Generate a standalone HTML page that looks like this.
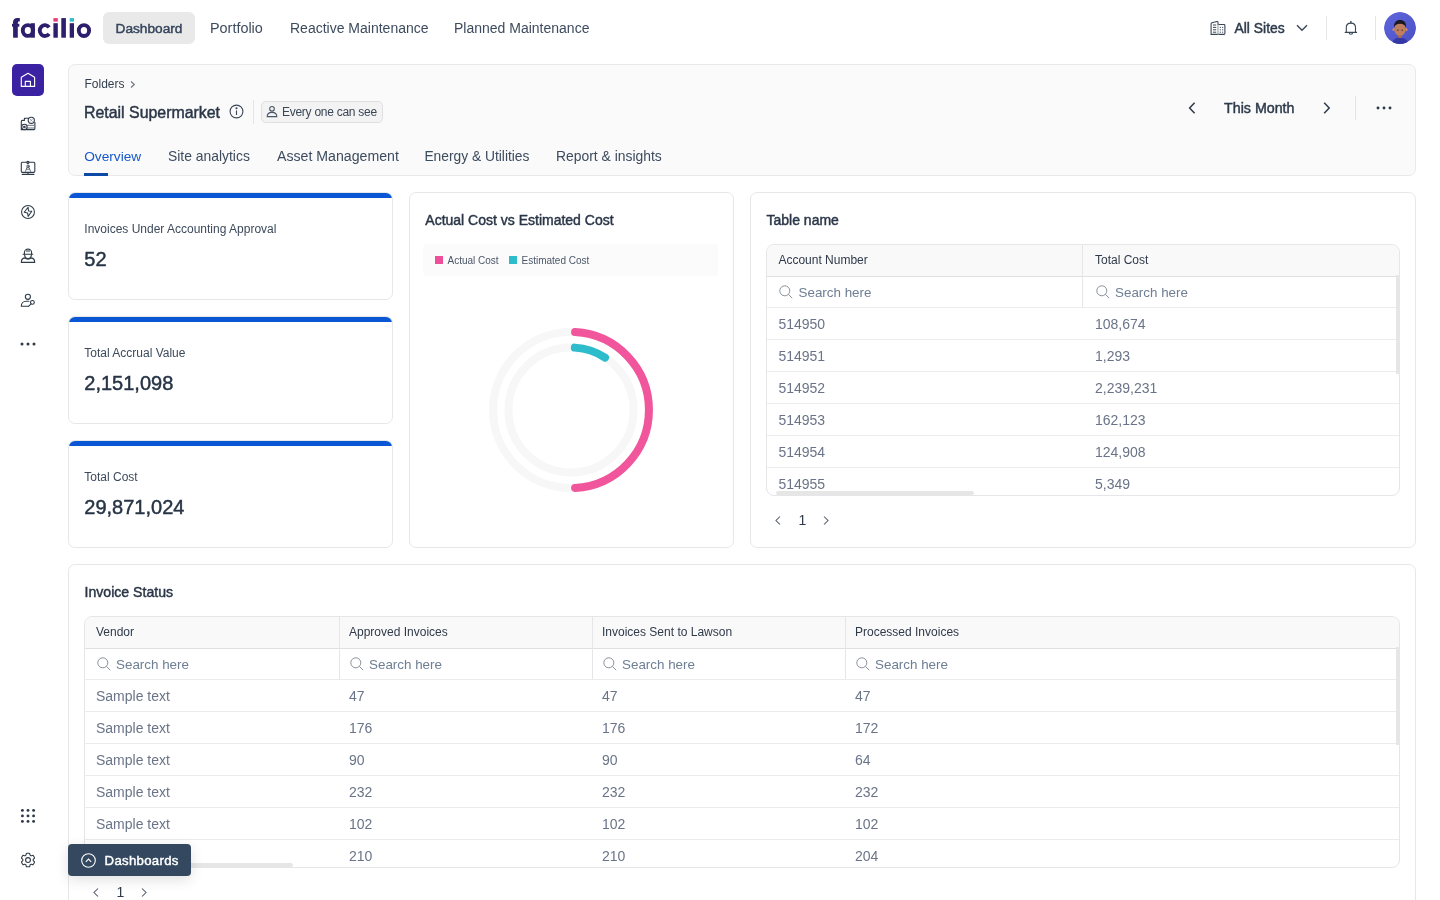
<!DOCTYPE html>
<html><head><meta charset="utf-8"><style>
*{box-sizing:border-box;margin:0;padding:0}
html,body{width:1440px;height:900px;overflow:hidden;background:#fff;font-family:"Liberation Sans",sans-serif}
.t{position:absolute;line-height:1;white-space:nowrap}
.a{position:absolute}
.card{position:absolute;background:#fff;border:1px solid #e7e7e8;border-radius:7px}
svg{position:absolute;overflow:visible}
</style></head><body>
<div id="root" style="position:absolute;left:0;top:0;width:1440px;height:900px;will-change:transform">
<svg style="left:0;top:0" width="100" height="50" viewBox="0 0 100 50">
<g fill="#2d1f6c">
<rect x="12" y="23.8" width="7.3" height="2.9"/>
<rect x="13.1" y="21.5" width="4.7" height="16.2"/>
<path d="M13.1 22.2C13.1 19.4 14.8 18 17.6 18H19.8V21.5H18.6C18 21.5 17.8 21.9 17.8 22.5V23H13.1Z"/>
<rect x="30.8" y="23.2" width="4.1" height="14.5"/>
<rect x="53.4" y="23.2" width="4.4" height="14.5"/>
<rect x="61.3" y="18.1" width="4.6" height="19.6"/>
<rect x="69.7" y="23.2" width="4.3" height="14.5"/>
</g>
<g fill="none" stroke="#2d1f6c" stroke-width="3.9">
<ellipse cx="27.9" cy="30.5" rx="5.1" ry="5.4"/>
<path d="M49.1 27.3A5.2 5.4 0 1 0 49.1 33.8"/>
<ellipse cx="83.95" cy="30.55" rx="5.15" ry="5.45"/>
</g>
<rect x="53.4" y="18.1" width="4.4" height="3.5" fill="#f0387a"/>
<rect x="69.7" y="18.1" width="4.3" height="3.5" fill="#2fbccb"/>
</svg>
<div class="a" style="left:103px;top:12px;width:92px;height:32px;background:#e9e9ea;border-radius:6px"></div>
<div class="t" style="left:115.5px;top:22.00px;font-size:13.7px;font-weight:normal;color:#34445a;;-webkit-text-stroke:0.45px #34445a">Dashboard</div>
<div class="t" style="left:210px;top:21.00px;font-size:14.4px;font-weight:normal;color:#3d4b5e;">Portfolio</div>
<div class="t" style="left:290px;top:21.00px;font-size:14px;font-weight:normal;color:#3d4b5e;">Reactive Maintenance</div>
<div class="t" style="left:454px;top:21.00px;font-size:14px;font-weight:normal;color:#3d4b5e;">Planned Maintenance</div>
<svg style="left:0;top:0" width="1440" height="50" viewBox="0 0 1440 50" fill="none" stroke="#3a4656" stroke-width="1.1" stroke-linejoin="round" stroke-linecap="round">
<path d="M1211.1 34.4V23.8Q1211.1 22.9 1212 22.7L1217 21.5Q1218 21.3 1218 22.3V24.5H1224Q1224.9 24.5 1224.9 25.4V33.5Q1224.9 34.4 1224 34.4Z"/>
<path d="M1218 24.5V34.4" stroke="#9aa1aa"/>
<path d="M1213.4 25h2.4M1213.4 27.4h2.4M1213.4 29.8h2.4M1213.4 32.2h2.4" stroke-width="1"/>
<path d="M1220.2 27.4h0.3M1222.5 27.4h0.3M1220.2 29.8h0.3M1222.5 29.8h0.3M1220.2 32.2h0.3M1222.5 32.2h0.3" stroke-width="1"/>
</svg>
<div class="t" style="left:1234.5px;top:22.00px;font-size:13.9px;font-weight:normal;color:#2c3a4c;;-webkit-text-stroke:0.45px #2c3a4c">All Sites</div>
<svg style="left:1296px;top:24px" width="12" height="8" viewBox="0 0 12 8" fill="none" stroke="#3a4656" stroke-width="1.4"><path d="M1 1.2l5 5 5-5"/></svg>
<div class="a" style="left:1326px;top:16px;width:1px;height:24px;background:#e6e6e8"></div>
<svg style="left:0;top:0" width="1440" height="50" viewBox="0 0 1440 50" fill="none" stroke="#3a4656" stroke-width="1.1" stroke-linejoin="round">
<path d="M1346.3 32.4V27.6C1346.3 24.9 1348.3 23.1 1350.9 23.1S1355.5 24.9 1355.5 27.6V32.4"/>
<path d="M1345.2 32.4H1356.6" stroke-linecap="round"/>
<path d="M1350.9 21.4v1.3" stroke-width="1.3" stroke-linecap="round"/>
<path d="M1349.2 32.7a1.7 1.6 0 0 0 3.4 0"/>
</svg>
<div class="a" style="left:1375px;top:16px;width:1px;height:24px;background:#e6e6e8"></div>
<svg style="left:1384px;top:12px" width="32" height="32" viewBox="0 0 32 32">
<defs><clipPath id="av"><circle cx="16" cy="16" r="16"/></clipPath>
<linearGradient id="avg" x1="0" y1="0" x2="1" y2="1"><stop offset="0" stop-color="#5f66dc"/><stop offset="1" stop-color="#4a50c4"/></linearGradient></defs>
<g clip-path="url(#av)">
<circle cx="16" cy="16" r="16" fill="url(#avg)"/>
<path d="M7 33c1.5-5 4.5-7.5 9-7.5s7.5 2.5 9 7.5z" fill="#3438a6"/>
<rect x="14.2" y="21.5" width="3.6" height="4.5" fill="#a86a4e"/>
<ellipse cx="9.6" cy="17.5" rx="1.2" ry="1.6" fill="#c98a6a"/><ellipse cx="22.4" cy="17.5" rx="1.2" ry="1.6" fill="#c98a6a"/>
<ellipse cx="16" cy="17.4" rx="5.7" ry="6.4" fill="#bf7e5e"/>
<path d="M10 15.6c-0.4-5 2.4-7.6 6-7.6s6.6 2.4 6 7.6c-0.8-2.6-2.8-3.8-6-3.8s-5.2 1.2-6 3.8z" fill="#1b1820"/>
<path d="M13 18.2h1.6M17.4 18.2h1.6" stroke="#3a2620" stroke-width="0.9"/>
</g>
</svg>
<div class="a" style="left:12px;top:64px;width:32px;height:32px;background:#3a22a3;border-radius:5px"></div>
<svg style="left:0;top:0" width="60" height="900" viewBox="0 0 60 900" fill="none" stroke="#2f3a48" stroke-width="1.1" stroke-linejoin="round" stroke-linecap="round">
<path d="M21.3 86.4V77.3L28 73.3l6.6 4v9.1zM25.3 86.4v-5.1h5.1v5.1" stroke="#fff" stroke-width="1.15"/>
<path d="M24.4 118.2h4.2M21.3 129.6V121.4q0-1 1-1h2.1v-1.2q0-1 1-1"/>
<path d="M21.3 129.6h12.6q1 0 1-1v-6.4"/>
<circle cx="31.3" cy="120.3" r="3.1" fill="#fff"/><path d="M30.2 119.2l2.2 2.2M32.4 119.2l-2.2 2.2" stroke-width="0.8" stroke="#8a929c"/>
<path d="M26.8 125.3h7.4M26.8 128h7.4" stroke="#6b7480" stroke-width="1"/>
<circle cx="24.4" cy="127" r="2.7" fill="#fff"/><circle cx="24.4" cy="127" r="0.8"/>
<rect x="21.3" y="162.2" width="13.5" height="10.2" rx="1.1"/><circle cx="27.9" cy="162.4" r="1" fill="#fff"/>
<path d="M28 172.4v2M22.2 174.4h11.7"/>
<circle cx="28" cy="166.2" r="1.2" stroke-width="0.9"/><path d="M25.6 171.2l1.2-3.6h2.4l1.2 3.6M26.6 169.2h2.8" stroke-width="0.9" stroke="#555e6a"/>
<circle cx="28" cy="212" r="6.45" stroke-width="1.05"/>
<path d="M28.1 207.2L28.5 210.9L31.8 211.3L28.1 216.4L27.6 213.1L24.2 212.3Z" stroke-width="1.05"/>
<path d="M24.4 254.2V252.6a3.6 3.6 0 0 1 7.2 0v1.6M23.1 254.3h9.6M27 249.4v2.2M29 249.4v2.2"/>
<path d="M24.6 254.6c0 2.4 1.4 3.9 3.4 3.9s3.4-1.5 3.4-3.9"/>
<path d="M21.3 262.4c0-2.6 1.6-4.2 3.4-4.5c0.8 0.8 1.9 1.2 3.3 1.2s2.5-0.4 3.3-1.2c1.8 0.3 3.4 1.9 3.4 4.5z"/>
<circle cx="27.9" cy="296.8" r="2.55"/>
<path d="M21.3 306.3c0-2.8 2-5 4.8-5h2.8M21.3 306.3h6.8"/>
<circle cx="32.4" cy="302.4" r="1.9"/><path d="M31.1 303.8l-2.6 2.6"/>
<g fill="#2f3a48" stroke="none"><circle cx="22" cy="344" r="1.5"/><circle cx="28" cy="344" r="1.5"/><circle cx="34" cy="344" r="1.5"/><circle cx="22.4" cy="810.4" r="1.45"/><circle cx="22.4" cy="815.9" r="1.45"/><circle cx="22.4" cy="821.4" r="1.45"/><circle cx="28.0" cy="810.4" r="1.45"/><circle cx="28.0" cy="815.9" r="1.45"/><circle cx="28.0" cy="821.4" r="1.45"/><circle cx="33.6" cy="810.4" r="1.45"/><circle cx="33.6" cy="815.9" r="1.45"/><circle cx="33.6" cy="821.4" r="1.45"/></g>
<g transform="translate(18.95 850.95) scale(0.755)" stroke-width="1.45"><path d="M9.594 3.94c.09-.542.56-.94 1.11-.94h2.593c.55 0 1.02.398 1.11.94l.213 1.281c.063.374.313.686.645.87.074.04.147.083.22.127.325.196.72.257 1.075.124l1.217-.456a1.125 1.125 0 0 1 1.37.49l1.296 2.247a1.125 1.125 0 0 1-.26 1.431l-1.003.827c-.293.241-.438.613-.43.992a7.723 7.723 0 0 1 0 .255c-.008.378.137.75.43.991l1.004.827c.424.35.534.955.26 1.43l-1.298 2.247a1.125 1.125 0 0 1-1.369.491l-1.217-.456c-.355-.133-.75-.072-1.076.124a6.47 6.470 0 0 1-.22.128c-.331.183-.581.495-.644.869l-.213 1.281c-.09.543-.56.94-1.110.94h-2.594c-.55 0-1.019-.398-1.11-.94l-.213-1.281c-.062-.374-.312-.686-.644-.87a6.52 6.52 0 0 1-.22-.127c-.325-.196-.72-.257-1.076-.124l-1.217.456a1.125 1.125 0 0 1-1.369-.49l-1.297-2.247a1.125 1.125 0 0 1 .26-1.431l1.004-.827c.292-.24.437-.613.43-.991a6.932 6.932 0 0 1 0-.255c.007-.38-.138-.751-.43-.992l-1.004-.827a1.125 1.125 0 0 1-.26-1.430l1.297-2.247a1.125 1.125 0 0 1 1.37-.491l1.216.456c.356.133.751.072 1.076-.124.072-.044.146-.086.22-.128.332-.183.582-.495.644-.869l.214-1.280Z"/><circle cx="12" cy="12" r="3.2"/></g>
</svg>
<div class="card" style="left:68px;top:64px;width:1348px;height:112px;background:#fafafa;border-color:#e9e9eb"></div>
<div class="t" style="left:84.5px;top:78.00px;font-size:12px;font-weight:normal;color:#333f4f;">Folders</div>
<svg style="left:130px;top:81px" width="6" height="7" viewBox="0 0 6 7" fill="none" stroke="#6b7380" stroke-width="1.1"><path d="M1 0.5l3.3 3-3.3 3"/></svg>
<div class="t" style="left:84px;top:105.00px;font-size:15.9px;font-weight:normal;color:#2a3647;;-webkit-text-stroke:0.45px #2a3647">Retail Supermarket</div>
<svg style="left:229.4px;top:104.4px" width="15" height="15" viewBox="0 0 15 15" fill="none" stroke="#3a4656" stroke-width="1.1">
<circle cx="7.5" cy="7.5" r="6.4"/><path d="M7.5 6.4v4.6"/><circle cx="7.5" cy="4.3" r="0.5" fill="#3a4656"/></svg>
<div class="a" style="left:253px;top:100px;width:1px;height:24px;background:#e4e4e6"></div>
<div class="a" style="left:261px;top:101px;width:122px;height:22px;background:#f3f3f4;border:1px solid #dfdfe2;border-radius:5px"></div>
<svg style="left:266px;top:105px" width="12" height="13" viewBox="0 0 12 13" fill="none" stroke="#4a5566" stroke-width="1.1">
<circle cx="6" cy="3.8" r="2.3"/><path d="M1.2 11.6c0-2.6 2.1-4.2 4.8-4.2s4.8 1.6 4.8 4.2z"/></svg>
<div class="t" style="left:282px;top:106.00px;font-size:12px;font-weight:normal;color:#3a4656;letter-spacing:-0.27px">Every one can see</div>
<div class="t" style="left:84.2px;top:150.00px;font-size:13.7px;font-weight:normal;color:#1759c9;">Overview</div>
<div class="a" style="left:84px;top:173px;width:24px;height:2.5px;background:#0c4aa6"></div>
<div class="t" style="left:168px;top:150.00px;font-size:13.9px;font-weight:normal;color:#3d4b5e;">Site analytics</div>
<div class="t" style="left:277px;top:149.00px;font-size:14.15px;font-weight:normal;color:#3d4b5e;">Asset Management</div>
<div class="t" style="left:424.4px;top:150.00px;font-size:13.8px;font-weight:normal;color:#3d4b5e;">Energy &amp; Utilities</div>
<div class="t" style="left:556px;top:150.00px;font-size:13.9px;font-weight:normal;color:#3d4b5e;">Report &amp; insights</div>
<svg style="left:1188px;top:102px" width="8" height="12" viewBox="0 0 8 12" fill="none" stroke="#2f3a48" stroke-width="1.5"><path d="M6.6 0.8L1.6 6l5 5.2"/></svg>
<div class="t" style="left:1224px;top:101.00px;font-size:14.25px;font-weight:normal;color:#2c3a4c;;-webkit-text-stroke:0.45px #2c3a4c">This Month</div>
<svg style="left:1323px;top:102px" width="8" height="12" viewBox="0 0 8 12" fill="none" stroke="#2f3a48" stroke-width="1.5"><path d="M1.2 0.8L6.2 6l-5 5.2"/></svg>
<div class="a" style="left:1355px;top:96px;width:1px;height:24px;background:#e4e4e6"></div>
<svg style="left:1376px;top:106px" width="16" height="4" viewBox="0 0 16 4" fill="#2f3a48"><circle cx="2" cy="2" r="1.45"/><circle cx="8" cy="2" r="1.45"/><circle cx="14" cy="2" r="1.45"/></svg>
<div class="card" style="left:68px;top:192px;width:325px;height:108px;overflow:hidden"><div class="a" style="left:-1px;right:-1px;top:-1px;height:6px;background:#0a57d6"></div></div>
<div class="t" style="left:84.3px;top:223.00px;font-size:12px;font-weight:normal;color:#3d4a5c;">Invoices Under Accounting Approval</div>
<div class="t" style="left:84.3px;top:249.00px;font-size:20px;font-weight:normal;color:#263445;;-webkit-text-stroke:0.45px #263445">52</div>
<div class="card" style="left:68px;top:316px;width:325px;height:108px;overflow:hidden"><div class="a" style="left:-1px;right:-1px;top:-1px;height:6px;background:#0a57d6"></div></div>
<div class="t" style="left:84.3px;top:347.00px;font-size:12px;font-weight:normal;color:#3d4a5c;">Total Accrual Value</div>
<div class="t" style="left:84.3px;top:373.00px;font-size:20px;font-weight:normal;color:#263445;;-webkit-text-stroke:0.45px #263445">2,151,098</div>
<div class="card" style="left:68px;top:440px;width:325px;height:108px;overflow:hidden"><div class="a" style="left:-1px;right:-1px;top:-1px;height:6px;background:#0a57d6"></div></div>
<div class="t" style="left:84.3px;top:471.00px;font-size:12px;font-weight:normal;color:#3d4a5c;">Total Cost</div>
<div class="t" style="left:84.3px;top:497.00px;font-size:20px;font-weight:normal;color:#263445;;-webkit-text-stroke:0.45px #263445">29,871,024</div>
<div class="card" style="left:409px;top:192px;width:325px;height:356px"></div>
<div class="t" style="left:425.3px;top:213.00px;font-size:14px;font-weight:normal;color:#2a3647;;-webkit-text-stroke:0.45px #2a3647">Actual Cost vs Estimated Cost</div>
<div class="a" style="left:423px;top:244px;width:295px;height:32px;background:#fbfbfb;border-radius:4px"></div>
<div class="a" style="left:435px;top:256px;width:8px;height:8px;background:#ef4e98"></div>
<div class="t" style="left:447.5px;top:256.00px;font-size:10px;font-weight:normal;color:#4a5668;">Actual Cost</div>
<div class="a" style="left:509px;top:256px;width:8px;height:8px;background:#2dbccb"></div>
<div class="t" style="left:521.5px;top:256.00px;font-size:10px;font-weight:normal;color:#4a5668;">Estimated Cost</div>
<svg style="left:0;top:0" width="1440" height="900" viewBox="0 0 1440 900">
<circle cx="571" cy="410" r="78" fill="none" stroke="#f7f7f7" stroke-width="8"/>
<circle cx="571" cy="410" r="62.5" fill="none" stroke="#f7f7f7" stroke-width="8"/>
<path d="M575.08 332.11A78 78 0 0 1 575.08 487.89" fill="none" stroke="#f1559b" stroke-width="8" stroke-linecap="round"/>
<path d="M574.82 347.62A62.5 62.5 0 0 1 605.04 357.58" fill="none" stroke="#2dbccb" stroke-width="8" stroke-linecap="round"/>
</svg>
<div class="card" style="left:750px;top:192px;width:666px;height:356px"></div>
<div class="t" style="left:766.5px;top:213.00px;font-size:14px;font-weight:normal;color:#2a3647;;-webkit-text-stroke:0.45px #2a3647">Table name</div>
<div class="a" style="left:766px;top:244px;width:634px;height:252px;border:1px solid #e6e6e8;border-radius:8px;overflow:hidden"><div class="a" style="left:0;top:0;right:0;height:32px;background:#f9f9fa;border-bottom:1px solid #e0e0e2"></div><div class="a" style="left:0;right:0;top:62px;height:1px;background:#ececee"></div><div class="a" style="left:0;right:0;top:94px;height:1px;background:#ececee"></div><div class="a" style="left:0;right:0;top:126px;height:1px;background:#ececee"></div><div class="a" style="left:0;right:0;top:158px;height:1px;background:#ececee"></div><div class="a" style="left:0;right:0;top:190px;height:1px;background:#ececee"></div><div class="a" style="left:0;right:0;top:222px;height:1px;background:#ececee"></div><div class="a" style="left:315px;top:0;width:1px;height:62px;background:#e6e6e8"></div><div class="a" style="left:629px;top:30px;width:3px;height:99px;background:#e6e6e7"></div><div class="a" style="left:9px;top:246px;width:198px;height:4px;background:#e6e6e7;border-radius:2px"></div></div>
<div class="t" style="left:778.4px;top:254.00px;font-size:12px;font-weight:normal;color:#2f3a4a;">Account Number</div>
<div class="t" style="left:1095px;top:254.00px;font-size:12px;font-weight:normal;color:#2f3a4a;">Total Cost</div>
<svg style="left:779px;top:285px" width="14" height="14" viewBox="0 0 14 14" fill="none" stroke="#8a919c" stroke-width="1"><circle cx="5.8" cy="5.8" r="5"/><path d="M9.4 9.4l3.8 3.8"/></svg>
<div class="t" style="left:798.5px;top:286.00px;font-size:13.4px;font-weight:normal;color:#6e7e94;">Search here</div>
<svg style="left:1096px;top:285px" width="14" height="14" viewBox="0 0 14 14" fill="none" stroke="#8a919c" stroke-width="1"><circle cx="5.8" cy="5.8" r="5"/><path d="M9.4 9.4l3.8 3.8"/></svg>
<div class="t" style="left:1115px;top:286.00px;font-size:13.4px;font-weight:normal;color:#6e7e94;">Search here</div>
<div class="t" style="left:778.4px;top:317.00px;font-size:14px;font-weight:normal;color:#6a7488;">514950</div>
<div class="t" style="left:1095px;top:317.00px;font-size:14px;font-weight:normal;color:#6a7488;">108,674</div>
<div class="t" style="left:778.4px;top:349.00px;font-size:14px;font-weight:normal;color:#6a7488;">514951</div>
<div class="t" style="left:1095px;top:349.00px;font-size:14px;font-weight:normal;color:#6a7488;">1,293</div>
<div class="t" style="left:778.4px;top:381.00px;font-size:14px;font-weight:normal;color:#6a7488;">514952</div>
<div class="t" style="left:1095px;top:381.00px;font-size:14px;font-weight:normal;color:#6a7488;">2,239,231</div>
<div class="t" style="left:778.4px;top:413.00px;font-size:14px;font-weight:normal;color:#6a7488;">514953</div>
<div class="t" style="left:1095px;top:413.00px;font-size:14px;font-weight:normal;color:#6a7488;">162,123</div>
<div class="t" style="left:778.4px;top:445.00px;font-size:14px;font-weight:normal;color:#6a7488;">514954</div>
<div class="t" style="left:1095px;top:445.00px;font-size:14px;font-weight:normal;color:#6a7488;">124,908</div>
<div class="t" style="left:778.4px;top:477.00px;font-size:14px;font-weight:normal;color:#6a7488;">514955</div>
<div class="t" style="left:1095px;top:477.00px;font-size:14px;font-weight:normal;color:#6a7488;">5,349</div>
<svg style="left:775px;top:516px" width="6" height="9" viewBox="0 0 6 9" fill="none" stroke="#4a5565" stroke-width="1.05"><path d="M5 0.5L1 4.5l4 4"/></svg>
<div class="t" style="left:798.5px;top:513.00px;font-size:14px;font-weight:normal;color:#2f3a48;">1</div>
<svg style="left:823px;top:516px" width="6" height="9" viewBox="0 0 6 9" fill="none" stroke="#4a5565" stroke-width="1.05"><path d="M1 0.5l4 4-4 4"/></svg>
<div class="card" style="left:68px;top:564px;width:1348px;height:400px"></div>
<div class="t" style="left:84.5px;top:585.00px;font-size:14.1px;font-weight:normal;color:#2a3647;;-webkit-text-stroke:0.45px #2a3647">Invoice Status</div>
<div class="a" style="left:84px;top:616px;width:1316px;height:252px;border:1px solid #e6e6e8;border-radius:8px;overflow:hidden"><div class="a" style="left:0;top:0;right:0;height:32px;background:#f9f9fa;border-bottom:1px solid #e0e0e2"></div><div class="a" style="left:0;right:0;top:62px;height:1px;background:#ececee"></div><div class="a" style="left:0;right:0;top:94px;height:1px;background:#ececee"></div><div class="a" style="left:0;right:0;top:126px;height:1px;background:#ececee"></div><div class="a" style="left:0;right:0;top:158px;height:1px;background:#ececee"></div><div class="a" style="left:0;right:0;top:190px;height:1px;background:#ececee"></div><div class="a" style="left:0;right:0;top:222px;height:1px;background:#ececee"></div><div class="a" style="left:254px;top:0;width:1px;height:62px;background:#e6e6e8"></div><div class="a" style="left:507px;top:0;width:1px;height:62px;background:#e6e6e8"></div><div class="a" style="left:760px;top:0;width:1px;height:62px;background:#e6e6e8"></div><div class="a" style="left:1311px;top:30px;width:3px;height:98px;background:#e6e6e7"></div><div class="a" style="left:9px;top:246px;width:199px;height:4px;background:#e6e6e7;border-radius:2px"></div></div>
<div class="t" style="left:96px;top:626.00px;font-size:12px;font-weight:normal;color:#2f3a4a;">Vendor</div>
<svg style="left:97px;top:657px" width="14" height="14" viewBox="0 0 14 14" fill="none" stroke="#8a919c" stroke-width="1"><circle cx="5.8" cy="5.8" r="5"/><path d="M9.4 9.4l3.8 3.8"/></svg>
<div class="t" style="left:116px;top:658.00px;font-size:13.4px;font-weight:normal;color:#6e7e94;">Search here</div>
<div class="t" style="left:349px;top:626.00px;font-size:12px;font-weight:normal;color:#2f3a4a;">Approved Invoices</div>
<svg style="left:350px;top:657px" width="14" height="14" viewBox="0 0 14 14" fill="none" stroke="#8a919c" stroke-width="1"><circle cx="5.8" cy="5.8" r="5"/><path d="M9.4 9.4l3.8 3.8"/></svg>
<div class="t" style="left:369px;top:658.00px;font-size:13.4px;font-weight:normal;color:#6e7e94;">Search here</div>
<div class="t" style="left:602px;top:626.00px;font-size:12px;font-weight:normal;color:#2f3a4a;">Invoices Sent to Lawson</div>
<svg style="left:603px;top:657px" width="14" height="14" viewBox="0 0 14 14" fill="none" stroke="#8a919c" stroke-width="1"><circle cx="5.8" cy="5.8" r="5"/><path d="M9.4 9.4l3.8 3.8"/></svg>
<div class="t" style="left:622px;top:658.00px;font-size:13.4px;font-weight:normal;color:#6e7e94;">Search here</div>
<div class="t" style="left:855px;top:626.00px;font-size:12px;font-weight:normal;color:#2f3a4a;">Processed Invoices</div>
<svg style="left:856px;top:657px" width="14" height="14" viewBox="0 0 14 14" fill="none" stroke="#8a919c" stroke-width="1"><circle cx="5.8" cy="5.8" r="5"/><path d="M9.4 9.4l3.8 3.8"/></svg>
<div class="t" style="left:875px;top:658.00px;font-size:13.4px;font-weight:normal;color:#6e7e94;">Search here</div>
<div class="t" style="left:96px;top:689.00px;font-size:14px;font-weight:normal;color:#6a7488;">Sample text</div>
<div class="t" style="left:349px;top:689.00px;font-size:14px;font-weight:normal;color:#6a7488;">47</div>
<div class="t" style="left:602px;top:689.00px;font-size:14px;font-weight:normal;color:#6a7488;">47</div>
<div class="t" style="left:855px;top:689.00px;font-size:14px;font-weight:normal;color:#6a7488;">47</div>
<div class="t" style="left:96px;top:721.00px;font-size:14px;font-weight:normal;color:#6a7488;">Sample text</div>
<div class="t" style="left:349px;top:721.00px;font-size:14px;font-weight:normal;color:#6a7488;">176</div>
<div class="t" style="left:602px;top:721.00px;font-size:14px;font-weight:normal;color:#6a7488;">176</div>
<div class="t" style="left:855px;top:721.00px;font-size:14px;font-weight:normal;color:#6a7488;">172</div>
<div class="t" style="left:96px;top:753.00px;font-size:14px;font-weight:normal;color:#6a7488;">Sample text</div>
<div class="t" style="left:349px;top:753.00px;font-size:14px;font-weight:normal;color:#6a7488;">90</div>
<div class="t" style="left:602px;top:753.00px;font-size:14px;font-weight:normal;color:#6a7488;">90</div>
<div class="t" style="left:855px;top:753.00px;font-size:14px;font-weight:normal;color:#6a7488;">64</div>
<div class="t" style="left:96px;top:785.00px;font-size:14px;font-weight:normal;color:#6a7488;">Sample text</div>
<div class="t" style="left:349px;top:785.00px;font-size:14px;font-weight:normal;color:#6a7488;">232</div>
<div class="t" style="left:602px;top:785.00px;font-size:14px;font-weight:normal;color:#6a7488;">232</div>
<div class="t" style="left:855px;top:785.00px;font-size:14px;font-weight:normal;color:#6a7488;">232</div>
<div class="t" style="left:96px;top:817.00px;font-size:14px;font-weight:normal;color:#6a7488;">Sample text</div>
<div class="t" style="left:349px;top:817.00px;font-size:14px;font-weight:normal;color:#6a7488;">102</div>
<div class="t" style="left:602px;top:817.00px;font-size:14px;font-weight:normal;color:#6a7488;">102</div>
<div class="t" style="left:855px;top:817.00px;font-size:14px;font-weight:normal;color:#6a7488;">102</div>
<div class="t" style="left:96px;top:849.00px;font-size:14px;font-weight:normal;color:#6a7488;">Sample text</div>
<div class="t" style="left:349px;top:849.00px;font-size:14px;font-weight:normal;color:#6a7488;">210</div>
<div class="t" style="left:602px;top:849.00px;font-size:14px;font-weight:normal;color:#6a7488;">210</div>
<div class="t" style="left:855px;top:849.00px;font-size:14px;font-weight:normal;color:#6a7488;">204</div>
<svg style="left:93px;top:888px" width="6" height="9" viewBox="0 0 6 9" fill="none" stroke="#4a5565" stroke-width="1.05"><path d="M5 0.5L1 4.5l4 4"/></svg>
<div class="t" style="left:116.5px;top:885.00px;font-size:14px;font-weight:normal;color:#2f3a48;">1</div>
<svg style="left:141px;top:888px" width="6" height="9" viewBox="0 0 6 9" fill="none" stroke="#4a5565" stroke-width="1.05"><path d="M1 0.5l4 4-4 4"/></svg>
<div class="a" style="left:68px;top:844px;width:123px;height:32px;background:#34485f;border-radius:4px;box-shadow:0 4px 14px rgba(0,0,0,0.12)"></div>
<svg style="left:80.5px;top:852.5px" width="15" height="15" viewBox="0 0 15 15" fill="none" stroke="#fff" stroke-width="1.1"><circle cx="7.5" cy="7.5" r="6.8"/><path d="M4.8 8.8L7.5 6.1l2.7 2.7"/></svg>
<div class="t" style="left:104.6px;top:854.00px;font-size:13.2px;font-weight:normal;color:#ffffff;letter-spacing:0.3px;-webkit-text-stroke:0.45px #ffffff">Dashboards</div>
</div></body></html>
